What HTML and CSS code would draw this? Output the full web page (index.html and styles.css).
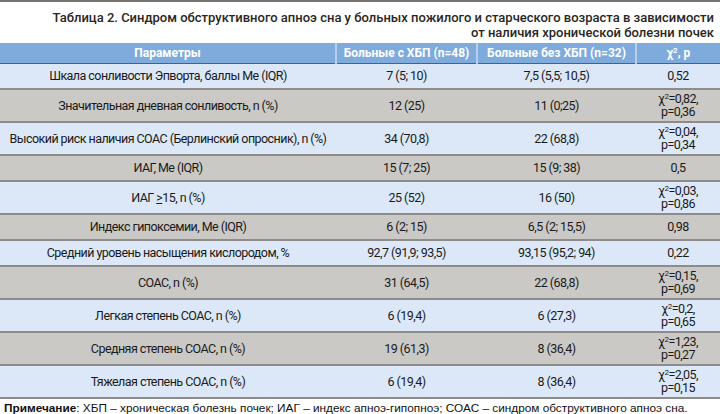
FILE: index.html
```html
<!DOCTYPE html>
<html lang="ru">
<head>
<meta charset="utf-8">
<link rel="stylesheet" href="styles.css">
</head>
<body>
<div class="page">
  <div class="topline"></div>
  <div class="title">Таблица 2. Синдром обструктивного апноэ сна у больных пожилого и старческого возраста в зависимости<br>от наличия хронической болезни почек</div>
  <table class="data">
    <colgroup>
      <col class="c1"><col class="c2"><col class="c3"><col class="c4">
    </colgroup>
    <thead>
      <tr><th>Параметры</th><th>Больные с ХБП (n=48)</th><th>Больные без ХБП (n=32)</th><th>χ<sup>2</sup>, p</th></tr>
    </thead>
    <tbody>
      <tr class="blue"><td>Шкала сонливости Эпворта, баллы Me (IQR)</td><td>7 (5; 10)</td><td>7,5 (5,5; 10,5)</td><td>0,52</td></tr>
      <tr class="gray"><td>Значительная дневная сонливость, n (%)</td><td>12 (25)</td><td>11 (0;25)</td><td>χ<sup>2</sup>=0,82,<br>p=0,36</td></tr>
      <tr class="blue"><td>Высокий риск наличия СОАС (Берлинский опросник), n (%)</td><td>34 (70,8)</td><td>22 (68,8)</td><td>χ<sup>2</sup>=0,04,<br>p=0,34</td></tr>
      <tr class="gray"><td>ИАГ, Me (IQR)</td><td>15 (7; 25)</td><td>15 (9; 38)</td><td>0,5</td></tr>
      <tr class="blue"><td>ИАГ <u>&gt;</u>15, n (%)</td><td>25 (52)</td><td>16 (50)</td><td>χ<sup>2</sup>=0,03,<br>p=0,86</td></tr>
      <tr class="gray"><td>Индекс гипоксемии, Me (IQR)</td><td>6 (2; 15)</td><td>6,5 (2; 15,5)</td><td>0,98</td></tr>
      <tr class="blue"><td>Средний уровень насыщения кислородом, %</td><td>92,7 (91,9; 93,5)</td><td>93,15 (95,2; 94)</td><td>0,22</td></tr>
      <tr class="gray"><td>СОАС, n (%)</td><td>31 (64,5)</td><td>22 (68,8)</td><td>χ<sup>2</sup>=0,15,<br>p=0,69</td></tr>
      <tr class="blue"><td>Легкая степень СОАС, n (%)</td><td>6 (19,4)</td><td>6 (27,3)</td><td>χ<sup>2</sup>=0,2,<br>p=0,65</td></tr>
      <tr class="gray"><td>Средняя степень СОАС, n (%)</td><td>19 (61,3)</td><td>8 (36,4)</td><td>χ<sup>2</sup>=1,23,<br>p=0,27</td></tr>
      <tr class="blue"><td>Тяжелая степень СОАС, n (%)</td><td>6 (19,4)</td><td>8 (36,4)</td><td>χ<sup>2</sup>=2,05,<br>p=0,15</td></tr>
    </tbody>
  </table>
  <div class="note"><b>Примечание</b>: ХБП – хроническая болезнь почек; ИАГ – индекс апноэ-гипопноэ; СОАС – синдром обструктивного апноэ сна.</div>
</div>
</body>
</html>
```

FILE: styles.css
```css
html, body {
  margin: 0;
  padding: 0;
  background: #ffffff;
}
.page {
  width: 720px;
  height: 414px;
  overflow: hidden;
}
.topline {
  height: 2px;
  background: #77736e;
}
.title {
  box-sizing: border-box;
  font-family: Roboto, "Liberation Sans", sans-serif;
  font-weight: 500;
  font-size: 13px;
  line-height: 15px;
  color: #2a2622;
  text-align: right;
  padding: 8px 6px 0 0;
  height: 41px;
}
.data {
  width: 720px;
  border-collapse: collapse;
  table-layout: fixed;
  font-family: Roboto, "Liberation Sans", sans-serif;
  font-size: 12.5px;
  letter-spacing: -0.55px;
  color: #1a1a1a;
}
.c1 { width: 336px; }
.c2 { width: 141px; }
.c3 { width: 159px; }
.c4 { width: 84px; }
.data th {
  background: #7eaadc;
  color: #ffffff;
  font-weight: bold;
  font-size: 12px;
  letter-spacing: 0;
  height: 20px;
  padding: 0;
  border-left: 2px solid #b6cfeb;
  border-bottom: 1px solid #5e5e5e;
}
.data th:first-child { border-left: none; }
.data td {
  text-align: center;
  line-height: 13px;
  padding: 2px 2px 3px;
  height: 19px;
  border-bottom: 2px solid #8e8c8a;
}
.data sup {
  font-size: 8px;
  line-height: 0;
  vertical-align: 4px;
}
.data u { text-decoration: underline; }
.blue td { background: #dce8f7; }
.gray td { background: #cbc9c6; }
.note {
  font-family: "Liberation Sans", sans-serif;
  font-size: 11.8px;
  line-height: 16px;
  color: #111;
  padding: 1px 0 0 4px;
  border-bottom: 2px solid #555;
}
```
